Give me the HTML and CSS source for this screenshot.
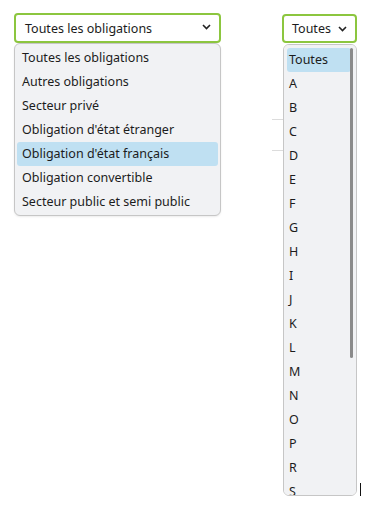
FILE: index.html
```html
<!DOCTYPE html>
<html lang="fr">
<head>
    <meta charset="UTF-8">
    <meta name="viewport" content="width=device-width, initial-scale=1.0">
    <title>Filtres</title>
    <link rel="stylesheet" href="styles.css">
</head>
<body>

<div class="backdrop">
    <div class="rule rule-1"></div>
    <div class="rule rule-2"></div>
</div>

<div class="filters">
    <div class="field field-type">
        <div class="select">
            <span>Toutes les obligations</span>
            <svg class="chevron" width="9" height="6" viewBox="0 0 9 6"><path d="M1 1l3.5 3.5L8 1" fill="none" stroke="#222" stroke-width="1.6"/></svg>
        </div>
        <ul class="options">
            <li>Toutes les obligations</li>
            <li>Autres obligations</li>
            <li>Secteur privé</li>
            <li>Obligation d'état étranger</li>
            <li class="selected">Obligation d'état français</li>
            <li>Obligation convertible</li>
            <li>Secteur public et semi public</li>
        </ul>
    </div>

    <div class="field field-letter">
        <div class="select">
            <span>Toutes</span>
            <svg class="chevron" width="9" height="6" viewBox="0 0 9 6"><path d="M1 1l3.5 3.5L8 1" fill="none" stroke="#222" stroke-width="1.6"/></svg>
        </div>
        <div class="options-wrap">
            <ul class="options letters">
                <li class="selected">Toutes</li>
                <li>A</li>
                <li>B</li>
                <li>C</li>
                <li>D</li>
                <li>E</li>
                <li>F</li>
                <li>G</li>
                <li>H</li>
                <li>I</li>
                <li>J</li>
                <li>K</li>
                <li>L</li>
                <li>M</li>
                <li>N</li>
                <li>O</li>
                <li>P</li>
                <li>R</li>
                <li>S</li>
            </ul>
            <div class="scrollbar"></div>
        </div>
        <div class="caret"></div>
    </div>
</div>

</body>
</html>
```

FILE: styles.css
```css
body {
    margin: 0;
    padding: 0;
    font-family: "Noto Sans", sans-serif;
    font-size: 12.5px;
    color: #1c1c1c;
    background-color: #fff;
}

/* bits of the page behind the open menus */
.backdrop {
    position: absolute;
    top: 0;
    left: 0;
}

.rule {
    position: absolute;
    left: 272px;
    width: 11px;
    height: 1px;
    background-color: #dcdcdc;
}

.rule-1 {
    top: 119px;
}

.rule-2 {
    top: 150px;
}

.filters {
    position: relative;
    display: flex;
    align-items: flex-start;
    padding-top: 13px;
}

.field {
    position: relative;
}

.field-type {
    width: 207px;
    margin-left: 14px;
}

.field-letter {
    width: 75px;
    margin-left: 61px;
}

.select {
    display: flex;
    align-items: center;
    justify-content: space-between;
    height: 30px;
    box-sizing: border-box;
    padding: 0 9px 0 9px;
    border: 2px solid #8cc63f;
    border-radius: 4px;
    background-color: #fff;
}

.field-type .select {
    padding-right: 8px;
}

.field-type .chevron {
    margin-top: -3px;
}

.field-letter .select {
    margin-top: 1px;
    height: 29px;
    padding: 0 8px 0 8px;
}

.chevron {
    display: block;
}

.options {
    list-style: none;
    margin: 0;
    padding: 2px 2px 1px 2px;
    background-color: #f1f2f4;
    border: 1px solid #c6c6c6;
    border-radius: 6px;
    box-shadow: 0 1px 2px rgba(0, 0, 0, 0.08);
}

.options li {
    height: 24px;
    line-height: 24px;
    padding-left: 5px;
    border-radius: 3px;
    white-space: nowrap;
}

.options li.selected {
    background-color: #bfe0f2;
}

.options-wrap {
    position: relative;
    margin: 1px 0 0 1px;
    height: 450px;
    overflow: hidden;
    background-color: #f1f2f4;
    border: 1px solid #c6c6c6;
    border-radius: 6px;
}

.letters {
    margin: 0;
    border: none;
    border-radius: 0;
    box-shadow: none;
    padding: 3px 5px 0 3px;
}

.letters li {
    padding-left: 2px;
}

.scrollbar {
    position: absolute;
    top: 3px;
    right: 3px;
    width: 3px;
    height: 310px;
    border-radius: 2px;
    background-color: #8a8a8a;
}

.caret {
    position: absolute;
    left: 78px;
    top: 470px;
    width: 1px;
    height: 17px;
    background-color: #111;
}
```
